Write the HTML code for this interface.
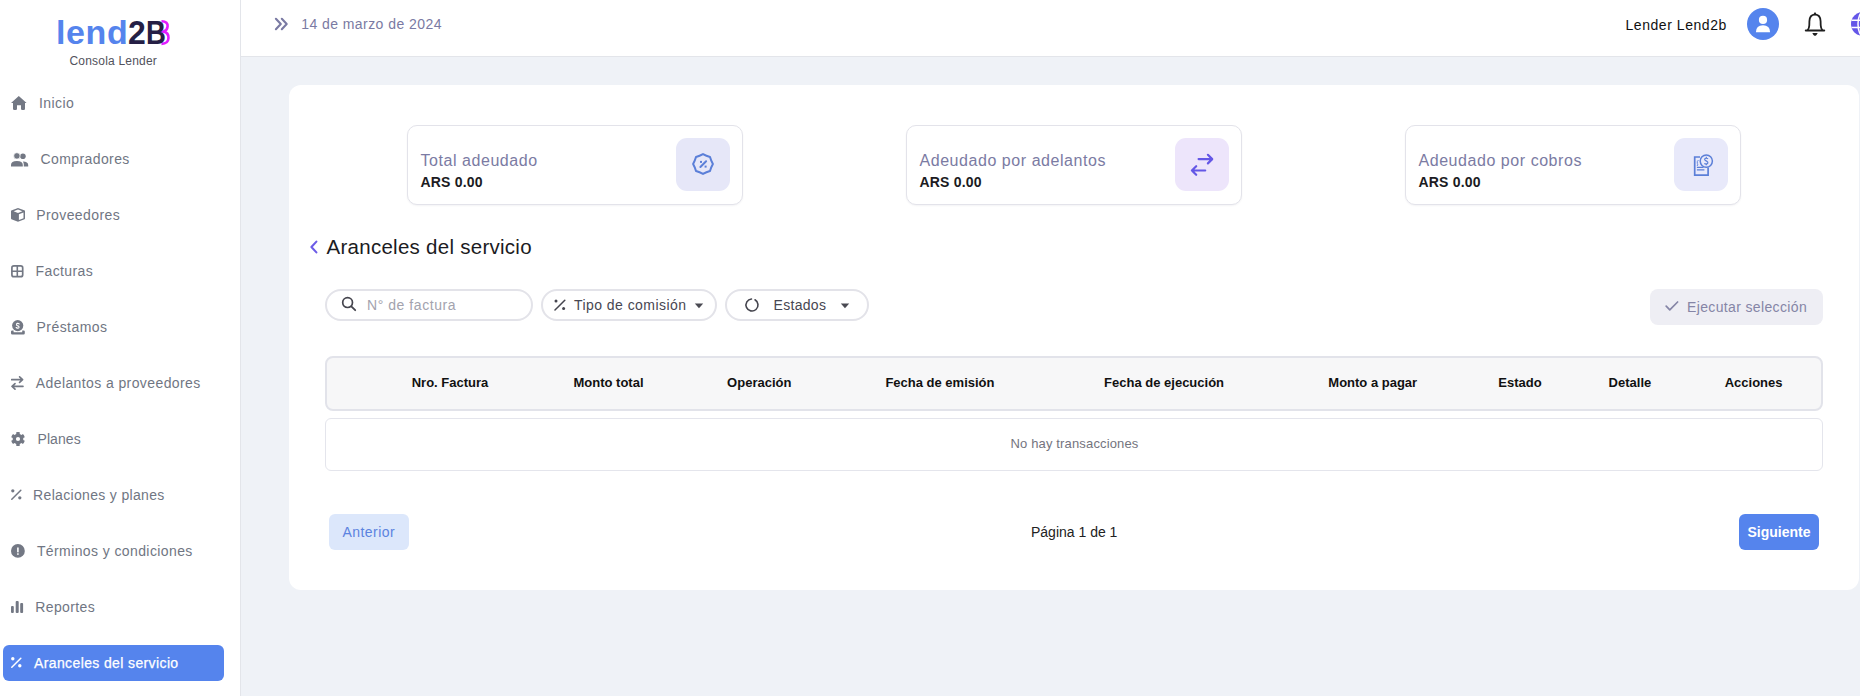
<!DOCTYPE html>
<html><head><meta charset="utf-8">
<style>
*{box-sizing:border-box;margin:0;padding:0}
html,body{width:1860px;height:696px;overflow:hidden;background:#eff2f7;font-family:"Liberation Sans",sans-serif;}
.a{position:absolute}
.t{position:absolute;white-space:nowrap;line-height:1}
#sidebar{position:absolute;left:0;top:0;width:241px;height:696px;background:#fff;border-right:1px solid #e3e5ea}
#header{position:absolute;left:241px;top:0;width:1619px;height:57px;background:#fff;border-bottom:1px solid #e3e5ea}
.nv{font-size:14px;color:#707683;letter-spacing:0.4px}
#card{position:absolute;left:289px;top:85px;width:1570px;height:505px;background:#fff;border-radius:12px}
.stat{position:absolute;top:125px;width:336px;height:80px;border:1px solid #e3e3ea;border-radius:10px;background:#fff;box-shadow:0 1px 2px rgba(20,20,60,0.05)}
.stat .l{left:12.5px;top:26.9px;font-size:16px;color:#7b7ba3;letter-spacing:0.55px}
.stat .v{left:12.5px;top:48.5px;font-size:14px;font-weight:700;color:#1b1b22;letter-spacing:0.2px}
.stat .ib{position:absolute;left:268px;top:12px;width:54px;height:53px;border-radius:11px}
.pill{position:absolute;top:289px;height:32px;border:2px solid #e3e3e9;border-radius:16px;background:#fff}
.th{top:376.5px;font-size:13px;font-weight:700;color:#111}
</style></head>
<body>
<div id="sidebar">
  <div class="t" style="left:56px;top:15.2px;font-size:34px;font-weight:700;letter-spacing:0.6px;color:#5584ed">lend</div><svg class="a" style="left:150px;top:16px" width="24" height="32" viewBox="0 0 24 32"><path d="M11.5 5.2 C16.3 5.2 17.8 7.6 17.6 10.4 C17.4 13 15.6 14.9 13.6 15.6 C16.8 16.2 18.6 18.8 18.5 22 C18.3 25.6 15.8 27.8 11.5 27.9" fill="none" stroke="#e21cff" stroke-width="2.6"/></svg><div class="t" style="left:127.9px;top:15.2px;font-size:34px;font-weight:700;color:#251f45;transform:scaleX(0.94);transform-origin:0 0">2</div><div class="t" style="left:146.2px;top:15.2px;font-size:34px;font-weight:700;color:#251f45;transform:scaleX(0.81);transform-origin:0 0">B</div>
  <div class="t" style="left:69.5px;top:55px;font-size:12px;color:#52525c;letter-spacing:0.2px">Consola Lender</div>
  <svg class="a" style="left:11px;top:96px" width="16" height="14" viewBox="0 0 16 14"><path fill="#737884" d="M7.8 0 L15.6 7 L14 7 L14 12.8 Q14 14 12.8 14 L11.2 14 Q10 14 10 12.8 L10 9.3 L6 9.3 L6 12.8 Q6 14 4.8 14 L3.2 14 Q2 14 2 12.8 L2 7 L0 7 Z"/></svg>
  <div class="t nv" style="left:39.0px;top:96.15px">Inicio</div>
  <svg class="a" style="left:11px;top:151.6px" width="18" height="15" viewBox="0 0 18 15"><circle cx="11.9" cy="4.3" r="2.8" fill="#737884"/><circle cx="5.9" cy="3.9" r="3.2" fill="#737884" stroke="#fff" stroke-width="0.7"/><path fill="#737884" d="M0 14.6 L0 12.9 Q0 9 5.9 9 Q11.8 9 11.8 12.9 L11.8 14.6 Z"/><path fill="#737884" d="M12.8 14.6 L12.8 12.6 Q12.8 10.6 11.9 9.4 Q17.2 9.6 17.2 12.9 L17.2 14.6 Z"/></svg>
  <div class="t nv" style="left:40.5px;top:152.15px">Compradores</div>
  <svg class="a" style="left:11px;top:208px" width="14" height="14" viewBox="0 0 14 14"><path fill="#737884" fill-rule="evenodd" d="M7 0 L13.8 2.6 Q14 2.8 14 3.2 L14 10.6 Q14 11 13.6 11.2 L7 13.8 L0.4 11.2 Q0 11 0 10.6 L0 3.2 Q0 2.8 0.3 2.6 Z M7 1.6 L2.6 3.3 L7 5 L11.4 3.3 Z M7.9 6.3 L7.9 11.9 L12.5 10.2 L12.5 4.6 Z"/></svg>
  <div class="t nv" style="left:36.3px;top:208.15px">Proveedores</div>
  <svg class="a" style="left:11px;top:264.5px" width="13" height="13" viewBox="0 0 13 13"><rect x="0.9" y="0.9" width="10.8" height="10.8" rx="2" fill="none" stroke="#737884" stroke-width="1.7"/><path d="M6.3 0.9 V11.7 M0.9 6.3 H11.7" stroke="#737884" stroke-width="1.6"/></svg>
  <div class="t nv" style="left:35.5px;top:264.15px">Facturas</div>
  <svg class="a" style="left:11px;top:319.5px" width="14" height="15" viewBox="0 0 14 15"><circle cx="6.7" cy="5.6" r="5.6" fill="#737884"/><path d="M8.2 3.9 Q7.3 3.2 6.4 3.4 Q5.3 3.8 5.6 4.9 Q5.9 5.6 6.9 5.9 Q8.2 6.3 8 7.4 Q7.6 8.3 6.4 8.1 Q5.7 8 5.2 7.5" fill="none" stroke="#fff" stroke-width="1.15" stroke-linecap="round"/><path fill="#737884" d="M0 11.6 Q0 10.4 1.2 10.4 L2.6 10.4 L2.6 12.2 L11.2 12.2 L11.2 10.4 L12.6 10.4 Q13.8 10.4 13.8 11.6 L13.8 13.2 Q13.8 14.4 12.6 14.4 L1.2 14.4 Q0 14.4 0 13.2 Z"/></svg>
  <div class="t nv" style="left:36.5px;top:320.15px;letter-spacing:0.45px">Préstamos</div>
  <svg class="a" style="left:11px;top:376px" width="13" height="14" viewBox="0 0 13 14"><path d="M0.6 3.6 H11.6 M8.6 0.8 L11.6 3.6 L8.6 6.4 M12 10.4 H1 M4 7.6 L1 10.4 L4 13.2" fill="none" stroke="#737884" stroke-width="1.6" stroke-linecap="round" stroke-linejoin="round"/></svg>
  <div class="t nv" style="left:35.8px;top:376.15px">Adelantos a proveedores</div>
  <svg class="a" style="left:10.8px;top:432px" width="14" height="14" viewBox="0 0 14 14"><path fill="#737884" fill-rule="evenodd" d="M5.27 1.99 L5.19 0.24 A7.0 7.0 0 0 1 8.81 0.24 L8.73 1.99 A5.3 5.3 0 0 1 10.48 3.00 L11.95 2.05 A7.0 7.0 0 0 1 13.76 5.19 L12.20 5.99 A5.3 5.3 0 0 1 12.20 8.01 L13.76 8.81 A7.0 7.0 0 0 1 11.95 11.95 L10.48 11.00 A5.3 5.3 0 0 1 8.73 12.01 L8.81 13.76 A7.0 7.0 0 0 1 5.19 13.76 L5.27 12.01 A5.3 5.3 0 0 1 3.52 11.00 L2.05 11.95 A7.0 7.0 0 0 1 0.24 8.81 L1.80 8.01 A5.3 5.3 0 0 1 1.80 5.99 L0.24 5.19 A7.0 7.0 0 0 1 2.05 2.05 L3.52 3.00 A5.3 5.3 0 0 1 5.27 1.99 Z M7 4.9 A2.1 2.1 0 1 0 7 9.1 A2.1 2.1 0 1 0 7 4.9 Z"/></svg>
  <div class="t nv" style="left:37.5px;top:432.15px;letter-spacing:0.07px">Planes</div>
  <svg class="a" style="left:11px;top:488.9px" width="11" height="11" viewBox="0 0 11 11"><circle cx="1.8" cy="1.8" r="1.65" fill="#737884"/><circle cx="8.8" cy="8.8" r="1.65" fill="#737884"/><path d="M0.8 10.2 L9.8 1.2" stroke="#737884" stroke-width="1.5" stroke-linecap="round"/></svg>
  <div class="t nv" style="left:33.1px;top:488.15px;letter-spacing:0.33px">Relaciones y planes</div>
  <svg class="a" style="left:11px;top:544px" width="14" height="14" viewBox="0 0 14 14"><circle cx="6.9" cy="6.9" r="6.9" fill="#737884"/><rect x="6.1" y="3.5" width="1.6" height="4.8" fill="#fff"/><rect x="6.1" y="9.3" width="1.6" height="1.5" fill="#fff"/></svg>
  <div class="t nv" style="left:36.9px;top:544.15px">Términos y condiciones</div>
  <svg class="a" style="left:11px;top:601px" width="13" height="12" viewBox="0 0 13 12"><rect x="0" y="5" width="2.8" height="7" rx="1" fill="#737884"/><rect x="4.7" y="0" width="3" height="12" rx="1" fill="#737884"/><rect x="9.2" y="2" width="2.9" height="10" rx="1" fill="#737884"/></svg>
  <div class="t nv" style="left:35.2px;top:600.15px">Reportes</div>
  <div class="a" style="left:3px;top:645px;width:221px;height:36px;background:#5584ed;border-radius:6px"></div>
  <svg class="a" style="left:11px;top:657.3px" width="11" height="11" viewBox="0 0 11 11"><circle cx="1.8" cy="1.8" r="1.7" fill="#fff"/><circle cx="8.8" cy="8.8" r="1.7" fill="#fff"/><path d="M0.8 10.2 L9.8 1.2" stroke="#fff" stroke-width="1.5" stroke-linecap="round"/></svg>
  <div class="t" style="left:34px;top:656.15px;font-size:14px;color:#fff;letter-spacing:0.38px;-webkit-text-stroke:0.25px #fff">Aranceles del servicio</div>
</div>
<div id="header">
  <svg class="a" style="left:33px;top:17px" width="15" height="14" viewBox="0 0 15 14"><path d="M1.9 1.8 L6.8 7 L1.9 12.2 M7.8 1.8 L12.7 7 L7.8 12.2" fill="none" stroke="#7a7aa3" stroke-width="2.1" stroke-linecap="round" stroke-linejoin="round"/></svg>
  <div class="t" style="left:60.19999999999999px;top:17.05px;font-size:14px;color:#7a7aa3;letter-spacing:0.44px">14 de marzo de 2024</div>
  <div class="t" style="left:1384.5px;top:17.55px;font-size:14px;color:#111;letter-spacing:0.55px">Lender Lend2b</div>
  <svg class="a" style="left:1506px;top:8px" width="32" height="32" viewBox="0 0 32 32"><circle cx="16" cy="16" r="16" fill="#5584ed"/><circle cx="16" cy="11.9" r="4.1" fill="#fff"/><path d="M8.9 24.2 Q9.1 17.3 16 17.3 Q22.9 17.3 23.1 24.2 Z" fill="#fff"/></svg>
  <svg class="a" style="left:1563px;top:11px" width="22" height="26" viewBox="0 0 22 26"><path d="M3.6 19.3 Q5.2 17.2 5.3 14.2 L5.4 10.2 Q5.6 3.6 11 3.6 Q16.4 3.6 16.6 10.2 L16.7 14.2 Q16.8 17.2 18.4 19.3" fill="none" stroke="#1f1f1f" stroke-width="1.8" stroke-linejoin="round"/><path d="M1.8 19.4 H20.2" stroke="#1f1f1f" stroke-width="2" stroke-linecap="round"/><path d="M8.3 22.1 H13.7 Q12.6 24.9 11 24.9 Q9.4 24.9 8.3 22.1 Z" fill="#1f1f1f"/><path d="M9 3.8 L11 0.9 L13 3.8 Z" fill="#1f1f1f"/></svg>
  <svg class="a" style="left:1610px;top:12px" width="9" height="25" viewBox="0 0 9 25"><defs><clipPath id="gc"><circle cx="12" cy="11.95" r="12"/></clipPath></defs><g clip-path="url(#gc)"><rect x="0" y="0" width="24" height="25" fill="#6456e8"/><path d="M0 8.2 H24 M0 15.6 H24" stroke="#fff" stroke-width="1.5"/><ellipse cx="12" cy="11.95" rx="5" ry="12" fill="none" stroke="#fff" stroke-width="1.5"/></g></svg>
</div>
<div id="card"></div>
<div class="stat" style="left:407px"><div class="t l">Total adeudado</div><div class="t v">ARS 0.00</div><div class="ib" style="background:#e6e7f8"><svg class="a" style="left:15.4px;top:14.4px" width="24" height="24" viewBox="0 0 24 24"><path d="M12.00 2.10 Q15.33 3.96 19.00 5.00 Q20.04 8.67 21.90 12.00 Q20.04 15.33 19.00 19.00 Q15.33 20.04 12.00 21.90 Q8.67 20.04 5.00 19.00 Q3.96 15.33 2.10 12.00 Q3.96 8.67 5.00 5.00 Q8.67 3.96 12.00 2.10 Z" fill="none" stroke="#5b7fd8" stroke-width="2" stroke-linejoin="round"/><path d="M9.4 15 L15.1 9.3" stroke="#5b7fd8" stroke-width="2" stroke-linecap="round"/><rect x="9" y="8.9" width="2" height="2" fill="#5b7fd8"/><rect x="13.6" y="13.6" width="2" height="2" fill="#5b7fd8"/></svg></div></div>
<div class="stat" style="left:906px"><div class="t l">Adeudado por adelantos</div><div class="t v">ARS 0.00</div><div class="ib" style="background:#ede5fb"><svg class="a" style="left:14px;top:14px" width="26" height="26" viewBox="0 0 26 26"><path d="M9.6 7.1 H23.2 M18.9 2.8 L23.2 7.1 L18.9 11.4 M16.2 18.5 H2.9 M7.2 14.2 L2.9 18.5 L7.2 22.8" fill="none" stroke="#6457e6" stroke-width="2.2" stroke-linecap="round" stroke-linejoin="round"/></svg></div></div>
<div class="stat" style="left:1405px"><div class="t l">Adeudado por cobros</div><div class="t v">ARS 0.00</div><div class="ib" style="background:#e8e9fa"><svg class="a" style="left:15px;top:15px" width="26" height="26" viewBox="0 0 26 26"><path d="M11 4 H5.7 V22.1 H19.1 V14.4" fill="none" stroke="#5b7fd8" stroke-width="1.7"/><path d="M7.9 14.4 H14.5 M7.9 16.9 H15.4" stroke="#5b7fd8" stroke-width="1.2"/><path d="M9.4 7 Q7.6 8.6 8.4 10.6 Q9.4 12 8 13" fill="none" stroke="#5b7fd8" stroke-width="0.9"/><circle cx="17.3" cy="8.1" r="6.1" fill="#e8e9fa" stroke="#5b7fd8" stroke-width="1.5"/><path d="M19.1 5.8 Q17.4 4.8 16 5.6 Q15 6.9 17.1 7.9 Q19.5 9 18.6 10.5 Q17.1 11.4 15.3 10.4 M17.3 3.8 V4.9 M17.3 11.1 V12.3" fill="none" stroke="#5b7fd8" stroke-width="1.2"/></svg></div></div>
<svg class="a" style="left:309px;top:240px" width="10" height="14" viewBox="0 0 10 14"><path d="M7.4 1.6 L2.4 7 L7.4 12.4" fill="none" stroke="#6c5ce7" stroke-width="2.1" stroke-linecap="round" stroke-linejoin="round"/></svg>
<div class="t" style="left:326.5px;top:236.55px;font-size:20.5px;color:#1b1b22;letter-spacing:0.27px">Aranceles del servicio</div>
<div class="pill" style="left:325px;width:208px"></div>
<svg class="a" style="left:341px;top:296px" width="16" height="16" viewBox="0 0 16 16"><circle cx="6.6" cy="6.6" r="4.9" fill="none" stroke="#45454e" stroke-width="1.7"/><path d="M10.3 10.3 L14.2 14.2" stroke="#45454e" stroke-width="1.8" stroke-linecap="round"/></svg>
<div class="t" style="left:367px;top:298.15px;font-size:14px;color:#a3a3ae;letter-spacing:0.55px">N° de factura</div>
<div class="pill" style="left:541px;width:176px"></div>
<svg class="a" style="left:554px;top:299px" width="12" height="12" viewBox="0 0 12 12"><circle cx="2" cy="2" r="1.5" fill="#45454e"/><circle cx="9.6" cy="9.6" r="1.5" fill="#45454e"/><path d="M1 11 L10.8 1.2" stroke="#45454e" stroke-width="1.5" stroke-linecap="round"/></svg>
<div class="t" style="left:574px;top:298.15px;font-size:14px;color:#474752;letter-spacing:0.45px">Tipo de comisión</div>
<svg class="a" style="left:694px;top:302.6px" width="10" height="6" viewBox="0 0 10 6"><path d="M0.8 0.5 H9.2 L5 5.2 Z" fill="#4a4a52"/></svg>
<div class="pill" style="left:725px;width:144px"></div>
<svg class="a" style="left:744px;top:297px" width="16" height="16" viewBox="0 0 16 16"><path d="M11 2.8 A6 6 0 1 1 7.48 2.02" fill="none" stroke="#45454e" stroke-width="1.6" stroke-linecap="round"/></svg>
<div class="t" style="left:773.5px;top:298.15px;font-size:14px;color:#474752;letter-spacing:0.3px">Estados</div>
<svg class="a" style="left:840px;top:302.6px" width="10" height="6" viewBox="0 0 10 6"><path d="M0.8 0.5 H9.2 L5 5.2 Z" fill="#4a4a52"/></svg>
<div class="a" style="left:1650px;top:289px;width:173px;height:36px;background:#eeeef4;border-radius:8px"></div>
<svg class="a" style="left:1665px;top:300px" width="14" height="12" viewBox="0 0 14 12"><path d="M1.2 6.2 L4.8 9.8 L12.6 2" fill="none" stroke="#8585a6" stroke-width="1.7" stroke-linecap="round" stroke-linejoin="round"/></svg>
<div class="t" style="left:1687px;top:300.15px;font-size:14px;color:#8585a6;letter-spacing:0.36px">Ejecutar selección</div>
<div class="a" style="left:325px;top:356px;width:1498px;height:55px;background:#f7f7f8;border:2px solid #e2e3ea;border-radius:8px"></div>
<div class="t" style="left:411.7px;top:375.80px;font-size:13px;font-weight:700;color:#111">Nro. Factura</div>
<div class="t" style="left:573.5px;top:375.80px;font-size:13px;font-weight:700;color:#111">Monto total</div>
<div class="t" style="left:727.1px;top:375.80px;font-size:13px;font-weight:700;color:#111">Operación</div>
<div class="t" style="left:885.4px;top:375.80px;font-size:13px;font-weight:700;color:#111">Fecha de emisión</div>
<div class="t" style="left:1104.1px;top:375.80px;font-size:13px;font-weight:700;color:#111">Fecha de ejecución</div>
<div class="t" style="left:1328.3px;top:375.80px;font-size:13px;font-weight:700;color:#111">Monto a pagar</div>
<div class="t" style="left:1498.3px;top:375.80px;font-size:13px;font-weight:700;color:#111">Estado</div>
<div class="t" style="left:1608.6px;top:375.80px;font-size:13px;font-weight:700;color:#111">Detalle</div>
<div class="t" style="left:1724.7px;top:375.80px;font-size:13px;font-weight:700;color:#111">Acciones</div>
<div class="a" style="left:325px;top:418px;width:1498px;height:53px;background:#fff;border:1px solid #e4e5ec;border-radius:6px"></div>
<div class="t" style="left:1010.5px;top:437.00px;font-size:13px;color:#74747e;letter-spacing:0.15px">No hay transacciones</div>
<div class="a" style="left:329px;top:514px;width:80px;height:36px;background:#dce7fb;border-radius:6px"></div>
<div class="t" style="left:342.5px;top:525.15px;font-size:14px;color:#5b83e0;letter-spacing:0.45px">Anterior</div>
<div class="t" style="left:1031px;top:525.15px;font-size:14px;color:#222">Página 1 de 1</div>
<div class="a" style="left:1739px;top:514px;width:80px;height:36px;background:#5584ed;border-radius:6px"></div>
<div class="t" style="left:1747.5px;top:525.15px;font-size:14px;color:#fff;font-weight:700">Siguiente</div>
</body></html>
